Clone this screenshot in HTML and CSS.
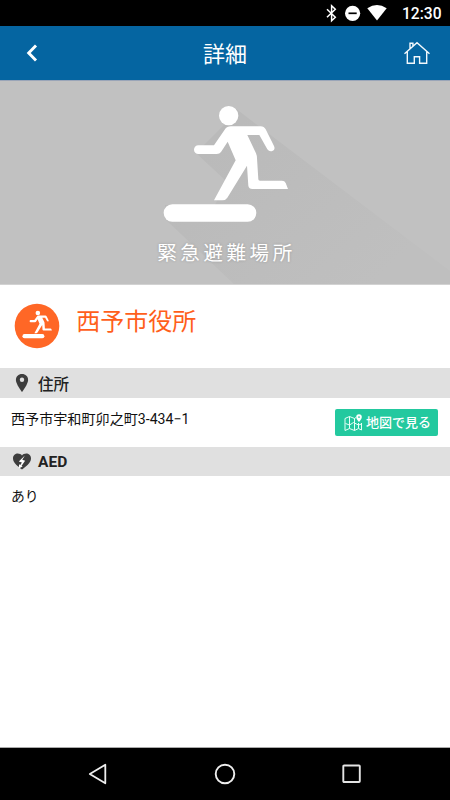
FILE: index.html
```html
<!DOCTYPE html>
<html lang="ja">
<head>
<meta charset="utf-8">
<title>詳細</title>
<link rel="stylesheet" href="styles.css">
</head>
<body>
<div class="screen">
  <div class="status">
    <svg class="status-icons" width="66" height="26" viewBox="322 0 66 26">
      <path d="M327 9.300l8.300 8-3.700 3.400V5.800l3.700 3.500-8.300 8" fill="none" stroke="#fff" stroke-width="1.500"/>
      <circle cx="352.600" cy="13.300" r="7.600" fill="#fff"/>
      <path d="M348.500 13.300h8.200" stroke="#000" stroke-width="1.700"/>
      <path d="M367.300 8.300Q377 1.800 386.700 8.300L377 20.600z" fill="#fff"/>
    </svg>
    <span class="clock">12:30</span>
  </div>
  <header class="header">
    <svg class="back" width="12" height="20" viewBox="0 0 12 20"><path d="M10 2.500L2.700 10l7.300 7.500" fill="none" stroke="#fff" stroke-width="2.900"/></svg>
    <h1 class="heading">詳細</h1>
    <svg class="home" width="28" height="24" viewBox="403 42 28 24"><path d="M404.500 54.700L417 43.700l12.500 11M407.300 52.800v11.400h7v-6.500h5.300v6.500h7.100V52.800M410 49.500v-5.300h2.900v2.800" fill="none" stroke="#f2f8fc" stroke-width="1.400"/></svg>
  </header>
  <section class="hero">
    <svg class="hero-art" width="450" height="144" viewBox="0 80 450 144">
      <defs>
        <linearGradient id="shade" gradientUnits="userSpaceOnUse" x1="230" y1="130" x2="370" y2="285"><stop offset="0" stop-color="#bababa"/><stop offset="1" stop-color="#bfbfbf"/></linearGradient>
        <g id="runner">
          <circle cx="236" cy="77" r="29"/>
          <path d="M145 166H192L224 119Q231 109 243 109H332Q342 109 347 118L372 168Q377 179 367 183Q358 186 352 178L328 135H292L318 190Q321 197 321 205L325 268Q325 272 330 272H396Q404 272 407 279L414 297H307Q297 297 295 287L291 227L232 323Q227 331 217 331H192L257 211L233 155L213 186Q209 192 200 192H145a13 13 0 0 1 0-26z"/>
          <rect x="41" y="343" width="278" height="52" rx="26"/>
        </g>
      </defs>
      <path d="M235 108L450 271V285H235L165 219V205H215L226 181L196 153L225 124z" fill="url(#shade)"/>
      <use href="#runner" fill="#fff" transform="translate(150 90) scale(.33333)"/>
    </svg>
    <p class="hero-label">緊急避難場所</p>
  </section>
  <section class="place">
    <svg class="badge" width="46" height="46" viewBox="14.500 303 46 46"><circle cx="37.500" cy="326" r="22.300" fill="#ff6726"/><use href="#runner" fill="#fff" transform="translate(19.700 307) scale(.079)"/></svg>
    <h2 class="place-name">西予市役所</h2>
  </section>
  <div class="bar bar-address">
    <svg class="bar-icon" width="20" height="20" viewBox="0 0 20 20"><path d="M10 1C6.400 1 3.900 3.500 3.900 6.900 3.900 11 10 19 10 19s6.100-8 6.100-12.100C16.100 3.500 13.600 1 10 1z" fill="#3d3d3d"/><circle cx="10" cy="6.700" r="2.200" fill="#e0e0e0"/></svg>
    <h3 class="bar-title">住所</h3>
  </div>
  <div class="row row-address">
    <p class="text">西予市宇和町卯之町3-434−1</p>
    <a class="map-button">
      <svg width="19" height="18" viewBox="0 0 19 18"><path d="M12 3.500L10.500 4.500 5.500 2.500 1 4.500v12l4.500-2 5 2 4-2 3 1.500V9M5.500 2.500v12M10.500 4.500v12M14.500 9v5.500M1.500 9.500l4 1.500 4-2.500 5 2.500 3-1" fill="none" stroke="#e8fff7" stroke-width="1"/><path d="M15 .2a2.800 2.800 0 0 0-2.800 2.900C12.200 5.200 15 8 15 8s2.800-2.800 2.800-4.900A2.800 2.800 0 0 0 15 .2z" fill="#fff"/><circle cx="15" cy="3.100" r=".9" fill="#23c99f"/></svg>
      <span class="map-label">地図で見る</span>
    </a>
  </div>
  <div class="bar bar-aed">
    <svg class="bar-icon" width="20" height="20" viewBox="0 0 20 20"><path d="M10 3.500C7.600.3 1 .8 1 6.500c0 4.800 5.500 8 9 11.100C13.500 14.500 19 11.300 19 6.500c0-5.700-6.600-6.200-9-3z" fill="#3d3d3d"/><path d="M12.900 3.500L6.800 9.600l3.100 1-1.600 2.300-1.200-.7-.4 4.300 4-1.900-1.200-.7 3.600-5.100-2.800-1.100z" fill="#fff"/></svg>
    <h3 class="bar-title">AED</h3>
  </div>
  <div class="row row-aed"><p class="text">あり</p></div>
  <nav class="nav">
    <svg width="20" height="22" viewBox="0 0 20 22"><path d="M17.300 1.700v18.600L1.800 11z" fill="none" stroke="#eee" stroke-width="1.800" stroke-linejoin="round"/></svg>
    <svg width="22" height="22" viewBox="0 0 22 22"><circle cx="11" cy="11" r="9.300" fill="none" stroke="#eee" stroke-width="1.900"/></svg>
    <svg width="20" height="22" viewBox="0 0 20 22"><rect x="2.300" y="2.500" width="16.500" height="16.500" rx=".8" fill="none" stroke="#e4e4e4" stroke-width="1.900"/></svg>
  </nav>
</div>
</body>
</html>
```
FILE: styles.css
```css
* { box-sizing: border-box; margin: 0; padding: 0; }
body { background: #fff; font-family: Roboto, "Noto Sans CJK JP", sans-serif; }
svg { display: block; flex: none; }
.screen { width: 450px; height: 800px; display: flex; flex-direction: column; overflow: hidden; }
.status { height: 26px; flex: none; background: #000; color: #fff; display: flex; justify-content: flex-end; padding-right: 9px; }
.clock { width: 39px; margin-left: 14px; font-size: 15.600px; font-weight: 500; line-height: 28px; white-space: nowrap; }
.header { height: 54px; flex: none; background: #0565a1; display: flex; align-items: center; justify-content: space-between; padding: 0 19px 0 26px; }
.heading { color: #fff; font-size: 22px; font-weight: 400; line-height: 30px; margin: 3px 0 0 9px; }
.hero { height: 205px; flex: none; background: #c1c1c1; border-top: 1px solid #9aa5b8; border-bottom: 1px solid #d2d2d2; overflow: hidden; }
.hero-art { overflow: visible; margin-top: -1px; }
.hero-label { position: relative; text-align: center; padding-left: 3px; color: #fff; font-size: 19.500px; letter-spacing: 3.600px; line-height: 30px; margin-top: 15px; text-shadow: 0 0 3px rgba(0,0,0,.2); }
.place { height: 83px; flex: none; display: flex; padding: 18px 0 0 14.500px; }
.badge { margin-left: -.3px; }
.place-name { color: #ff5f1b; font-size: 24px; font-weight: 400; line-height: 36px; margin: 1px 0 0 16px; }
.bar { flex: none; background: #e0e0e0; display: flex; align-items: center; padding-left: 12px; }
.bar-address { height: 30px; }
.bar-aed { height: 29px; }
.bar-title { color: #222; font-size: 15.500px; font-weight: 700; line-height: 24px; margin-left: 6px; }
.bar-address .bar-title { font-weight: 500; margin-top: 3px; }
.row { display: flex; justify-content: space-between; padding: 0 12px 0 11px; }
.row-address { height: 49px; flex: none; }
.text { color: #111; font-size: 14.100px; line-height: 22px; margin-top: 10px; }
.map-button { width: 103px; height: 27px; margin-top: 11px; background: #23c99f; border-radius: 2px; display: flex; align-items: center; padding-left: 9px; }
.map-label { color: #fff; font-size: 13px; font-weight: 500; line-height: 20px; margin-left: 3px; white-space: nowrap; }
.row-aed { flex: 1; }
.row-aed .text { margin-top: 9px; font-size: 13.800px; }
.nav { height: 53px; flex: none; background: #000; border-top: 1px solid #aaa; display: flex; align-items: center; justify-content: space-between; padding: 0 89px 0 88px; }
```
